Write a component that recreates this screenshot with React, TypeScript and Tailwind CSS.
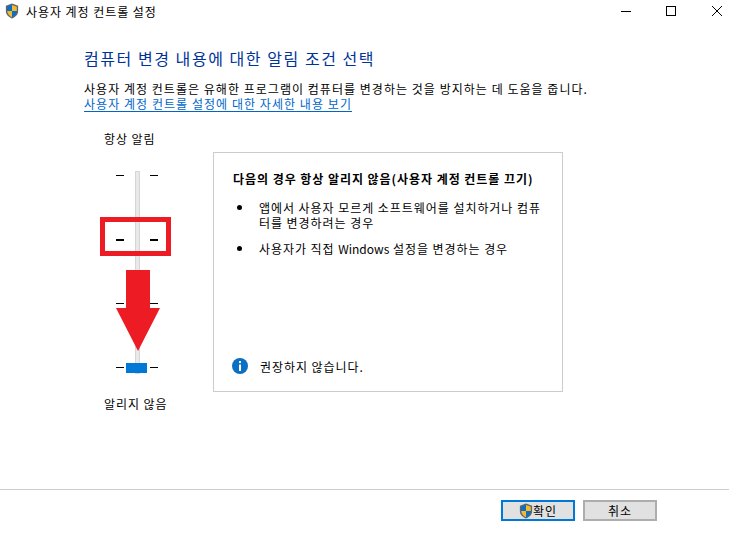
const FONT = "font-['Noto_Sans_CJK_KR',sans-serif]";

function Shield({ className }: { className: string }) {
  return (
    <svg viewBox="0 0 16 18" className={className}>
      <path d="M8 .5 L15 3 V9 C15 13.5 11.5 16 8 17.5 C4.5 16 1 13.5 1 9 V3 Z" fill="#5c6670" />
      <path d="M8 2 L2.5 4 V9 H8 Z" fill="#0b6fc4" />
      <path d="M8 2 L13.5 4 V9 H8 Z" fill="#f7b92c" />
      <path d="M2.5 9 H8 V16 C5 14.7 2.7 12.6 2.5 9 Z" fill="#f7b92c" />
      <path d="M13.5 9 H8 V16 C11 14.7 13.3 12.6 13.5 9 Z" fill="#0b6fc4" />
    </svg>
  );
}

function WindowControls() {
  return (
    <div className="flex items-center">
      <svg width="10" height="10" viewBox="0 0 10 10" className="mr-[35px]">
        <path d="M0 5.5 H10" stroke="#000" strokeWidth="1" />
      </svg>
      <svg width="10" height="10" viewBox="0 0 10 10" className="mr-[36px]">
        <rect x=".5" y=".5" width="9" height="9" fill="none" stroke="#000" strokeWidth="1" />
      </svg>
      <svg width="10" height="10" viewBox="0 0 10 10">
        <path d="M0 0 L10 10 M10 0 L0 10" stroke="#000" strokeWidth="1" />
      </svg>
    </div>
  );
}

function TickRow({ bold, thumb }: { bold?: boolean; thumb?: boolean }) {
  const tick = bold ? 'h-[2px] w-[8px] bg-black' : 'h-px w-[8px] bg-black';
  return (
    <div className="relative flex w-[42px] items-center justify-between">
      <div className={tick} />
      {thumb && <div className="absolute left-[10px] top-[-4px] h-[10px] w-[21px] bg-[#0078d7]" />}
      <div className={tick} />
    </div>
  );
}

function Slider() {
  return (
    <div className="relative flex h-[204px] w-[42px] flex-col justify-between pt-[5px] pb-[6px]">
      <div className="absolute left-[19px] top-[1px] h-[203px] w-[5px] border border-[#d6d6d6] bg-[#e7eae9]" />
      <TickRow />
      <TickRow bold />
      <TickRow />
      <TickRow thumb />
      {/* annotation drawn over the screenshot */}
      <div className="absolute left-[-16px] top-[47px] h-[39px] w-[71px] border-[5px] border-[#ed1c24]" />
      <svg width="44" height="82" viewBox="0 0 44 82" className="absolute left-[0px] top-[100px]">
        <path d="M10 0 H34 V38 H44 L22 81 L0 38 H10 Z" fill="#ed1c24" />
      </svg>
    </div>
  );
}

export default function App() {
  return (
    <div className={`${FONT} flex h-[544px] w-[729px] flex-col bg-white text-[12px] leading-[15px] tracking-[0.95px] text-black`}>
      <div className="flex h-[22px] items-center justify-between pl-[5px] pr-[7px]">
        <div className="flex items-center gap-[7px]">
          <Shield className="h-[16px] w-[14px]" />
          <span>사용자 계정 컨트롤 설정</span>
        </div>
        <WindowControls />
      </div>

      <div className="flex flex-1 flex-col pl-[84px]">
        <h1 className="mt-[25px] text-[16px] font-normal leading-[22px] tracking-[1.55px] text-[#003399]">
          컴퓨터 변경 내용에 대한 알림 조건 선택
        </h1>
        <p className="mt-[12px] tracking-[1.03px]">사용자 계정 컨트롤은 유해한 프로그램이 컴퓨터를 변경하는 것을 방지하는 데 도움을 줍니다.</p>
        <a className="w-fit border-b border-[#0066cc] tracking-[1.05px] text-[#0066cc]">사용자 계정 컨트롤 설정에 대한 자세한 내용 보기</a>

        <div className="flex">
          <div className="mt-[19px] flex w-[129px] flex-col pl-[20px]">
            <span>항상 알림</span>
            <div className="ml-[12px] mt-[24px]">
              <Slider />
            </div>
            <span className="mt-[22px]">알리지 않음</span>
          </div>

          <div className="mt-[40px] flex h-[240px] w-[350px] flex-col border border-[#cccccc] pl-[19px] pr-[19px] pt-[18px]">
            <h2 className="font-bold">다음의 경우 항상 알리지 않음(사용자 계정 컨트롤 끄기)</h2>
            <ul className="mt-[14px] flex flex-col gap-[11px]">
              <li className="flex">
                <span className="mt-[5px] h-[5px] w-[5px] shrink-0 rounded-full bg-black ml-[4px]" />
                <span className="ml-[17px] w-[290px] break-all">앱에서 사용자 모르게 소프트웨어를 설치하거나 컴퓨터를 변경하려는 경우</span>
              </li>
              <li className="flex">
                <span className="mt-[5px] h-[5px] w-[5px] shrink-0 rounded-full bg-black ml-[4px]" />
                <span className="ml-[17px]">
                  사용자가 직접 <span className="tracking-normal">Windows</span> 설정을 변경하는 경우
                </span>
              </li>
            </ul>
            <div className="-ml-[1px] mb-[17px] mt-auto flex items-center gap-[12px]">
              <svg width="16" height="16" viewBox="0 0 16 16">
                <circle cx="8" cy="8" r="8" fill="#0b6fc4" />
                <rect x="7" y="3" width="2" height="2" fill="#fff" />
                <rect x="7" y="6.5" width="2" height="6.5" fill="#fff" />
              </svg>
              <span>권장하지 않습니다.</span>
            </div>
          </div>
        </div>
      </div>

      <div className="flex h-[55px] justify-end gap-[8px] border-t border-[#cccccc] pr-[72px] pt-[10px]">
        <button className="flex h-[21px] w-[74px] items-center justify-center border-2 border-[#0078d7] bg-[#e1e1e1]">
          <Shield className="h-[16px] w-[14px]" />
          <span>확인</span>
        </button>
        <button className="flex h-[21px] w-[74px] items-center justify-center border-2 border-[#adadad] bg-[#e1e1e1]">
          취소
        </button>
      </div>
    </div>
  );
}
